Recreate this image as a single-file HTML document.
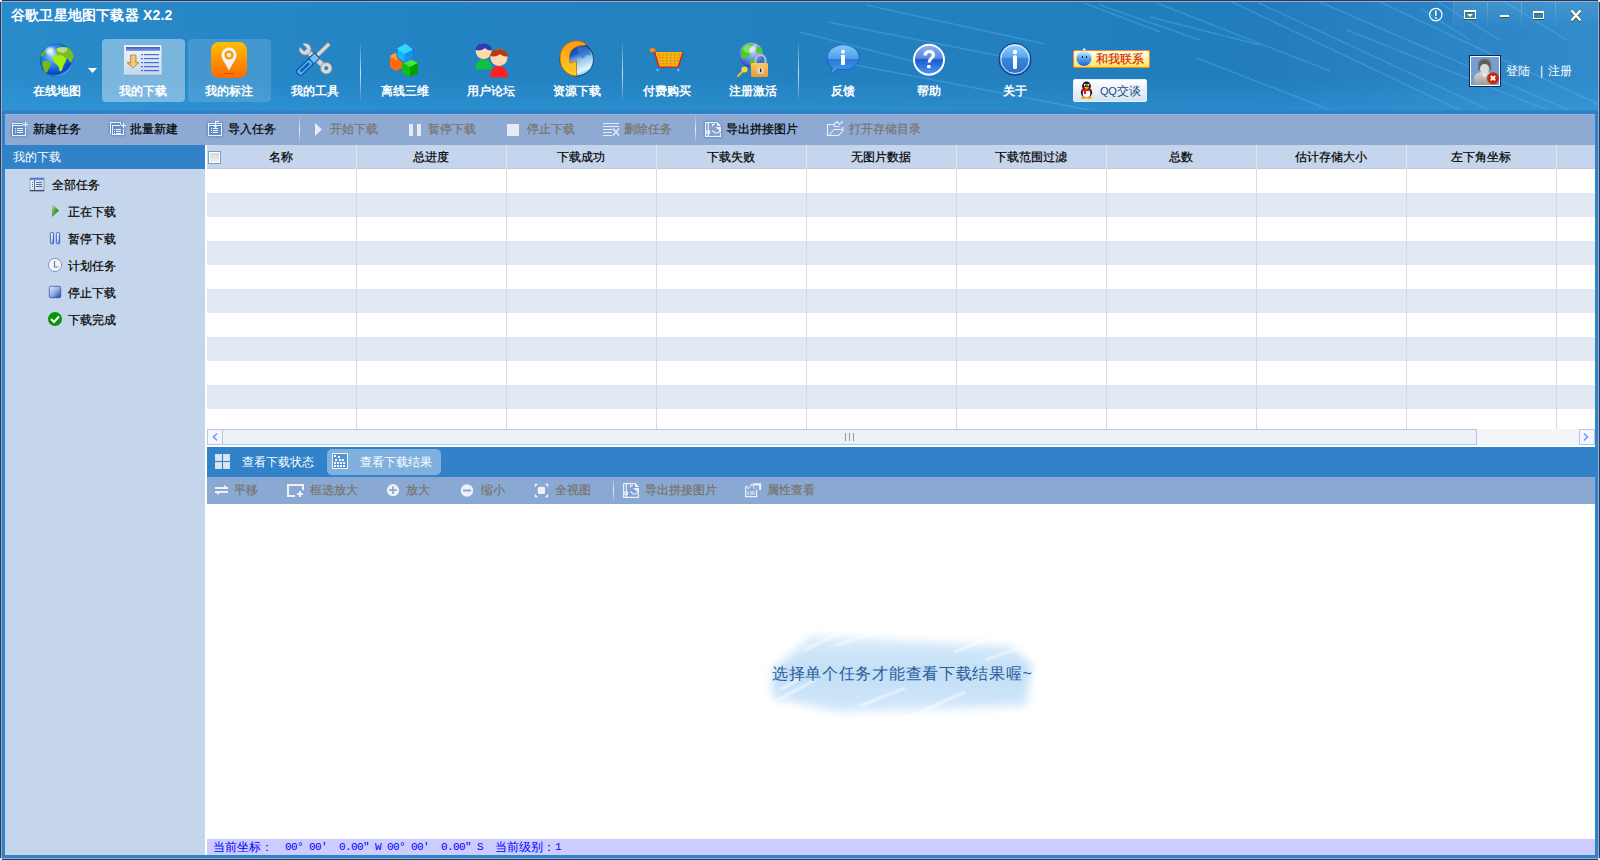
<!DOCTYPE html>
<html><head><meta charset="utf-8">
<style>
*{box-sizing:border-box}
html,body{margin:0;padding:0}
body{width:1600px;height:860px;position:relative;overflow:hidden;background:#2b3a4e;font-family:"Liberation Sans",sans-serif;font-size:12px;color:#000}
.a{position:absolute}
.tb,.li,.ht,.mt,.st{-webkit-text-stroke-width:.2px}
.t{position:absolute;white-space:nowrap;line-height:12px;font-size:12px}
#hdr{left:2px;top:2px;width:1596px;height:108px;background:linear-gradient(rgba(60,170,235,0) 70%,rgba(60,170,235,.3) 100%),linear-gradient(to right,#2a8bcb 0%,#2483c3 25%,#2380be 55%,#2179bc 100%)}
.btn{position:absolute;top:39px;width:83px;height:63px;border-radius:4px}
.lbl{position:absolute;top:85px;color:#fff;font-weight:bold;font-size:12px;line-height:12px;white-space:nowrap;text-align:center;width:90px;margin-left:-45px}
.sep{position:absolute;top:40px;width:1px;height:62px;background:linear-gradient(rgba(255,255,255,0),rgba(255,255,255,.75) 55%,rgba(255,255,255,0))}
.tb{position:absolute;top:123px;color:#000;line-height:12px}
.tbd{color:#79746e}
.row{position:absolute;left:207px;width:1388px;height:24px;background:#e2e8f4}
.vl{position:absolute;top:169px;width:1px;height:260px;background:#dadada}
.hl{position:absolute;top:145px;width:1px;height:24px;background:#dfe7f2}
.ht{position:absolute;top:151px;width:150px;text-align:center;line-height:12px}
.li{position:absolute;color:#000;line-height:12px}
.sm{position:absolute;top:841px;color:#0000ff;font-family:"Liberation Mono",monospace;font-size:11px;line-height:12px;letter-spacing:-.6px;white-space:nowrap}
.mt{position:absolute;top:484px;color:#78736d;line-height:12px}
</style></head>
<body>
<!-- frame -->
<div class="a" style="left:1px;top:1px;width:1598px;height:858px;background:#8cb0de"></div>
<div class="a" style="left:2px;top:2px;width:1596px;height:856px;background:#3182c8"></div>
<div class="a" id="hdr"></div>
<svg class="a" style="left:2px;top:2px" width="1596" height="108" viewBox="2 2 1596 108"><defs><filter id="bl" x="-10%" y="-10%" width="120%" height="120%"><feGaussianBlur stdDeviation="0.9"/></filter><filter id="bl2" x="-10%" y="-10%" width="120%" height="120%"><feGaussianBlur stdDeviation="0.7"/></filter></defs>
 <rect x="2" y="2" width="1596" height="108" fill="url(#trg)"/>
 <radialGradient id="trg" cx="1600" cy="50" r="330" gradientUnits="userSpaceOnUse"><stop offset="0" stop-color="#5ab8f0" stop-opacity=".3"/><stop offset="1" stop-color="#5ab8f0" stop-opacity="0"/></radialGradient>
 <g stroke="#58b4ec" stroke-width="1.4" fill="none" opacity=".38" filter="url(#bl2)">
  <path d="M1157 3 L1330 71"/>
  <path d="M1197 58 L1330 110"/>
  <path d="M1232 2 L1470 115"/>
  <path d="M1259 3 L1500 115"/>
  <path d="M1150 17 L1260 45"/>
  <path d="M1347 30 L1560 115"/>
  <path d="M1380 2 L1600 105"/>
  <path d="M1320 2 L1580 115"/>
  <path d="M1100 5 L1200 40"/>
  <path d="M828 22 L1000 56"/>
  <path d="M800 32 L935 67"/>
  <path d="M866 5 L1045 44"/>
  <path d="M1084 3 L1160 32"/>
  <path d="M840 62 L1100 112"/>
 </g>
</svg>
<!-- window controls -->
<svg class="a" style="left:1420px;top:0" width="180" height="40" viewBox="1420 0 180 40">
 <defs><linearGradient id="wsep" x1="0" y1="0" x2="0" y2="1"><stop offset="0" stop-color="#fff" stop-opacity=".22"/><stop offset="1" stop-color="#fff" stop-opacity="0"/></linearGradient></defs>
 <rect x="1454" y="2" width="144" height="26" fill="url(#wbg)"/>
 <linearGradient id="wbg" x1="0" y1="0" x2="0" y2="1"><stop offset="0" stop-color="#fff" stop-opacity=".1"/><stop offset="1" stop-color="#fff" stop-opacity="0"/></linearGradient>
 <g stroke="#5cc0f4" stroke-width="1.3" opacity=".35"><path d="M1438 2L1500 40"/><path d="M1505 2L1567 40"/><path d="M1420 8L1470 40"/></g>
 <g fill="url(#wsep)"><rect x="1453" y="2" width="1" height="26"/><rect x="1487" y="2" width="1" height="26"/><rect x="1521" y="2" width="1" height="26"/><rect x="1555" y="2" width="1" height="26"/></g>
 <circle cx="1435.8" cy="14.6" r="6.2" fill="none" stroke="#fff" stroke-width="1.2"/>
 <rect x="1435" y="10.5" width="1.6" height="5.5" fill="#fff"/><rect x="1435" y="17" width="1.6" height="1.6" fill="#fff"/>
 <g shape-rendering="crispEdges">
  <rect x="1464" y="10" width="12" height="10" fill="#4a5a08"/>
  <rect x="1464" y="10" width="12" height="9" fill="#fff"/>
  <rect x="1465" y="12" width="10" height="6" fill="#2b86c6"/>
  <rect x="1465" y="12" width="10" height="1" fill="#5a6a10"/>
  <rect x="1500" y="15" width="9" height="3" fill="#4a5a08"/><rect x="1500" y="15" width="9" height="2" fill="#fff"/>
  <rect x="1533" y="11" width="11" height="9" fill="#4a5a08"/>
  <rect x="1533" y="11" width="11" height="8" fill="#fff"/>
  <rect x="1534" y="13" width="9" height="5" fill="#2b84c4"/>
  <rect x="1534" y="13" width="9" height="1" fill="#5a6a10"/>
 </g>
 <path d="M1467 14h6l-3 3z" fill="#fff"/>
 <path d="M1571.5 11.5L1580.5 21.5M1580.5 11.5L1571.5 21.5" stroke="#4a5a08" stroke-width="2.2"/>
 <path d="M1571.5 10.5L1580.5 20.5M1580.5 10.5L1571.5 20.5" stroke="#fff" stroke-width="2.2"/>
</svg>

<svg class="a" style="left:0;top:0" width="1600" height="860" viewBox="0 0 1600 860">
 <path d="M0 0h2.4L0 2.4z" fill="#fff"/><path d="M1600 0h-2.4L1600 2.4z" fill="#fff"/>
 <path d="M0 860h2.4L0 857.6z" fill="#fff"/><path d="M1600 860h-2.4l2.4-2.4z" fill="#fff"/>
 <path d="M1.5 3.5l2-2" stroke="#2a8cd0" stroke-width="1"/><path d="M1598.5 3.5l-2-2" stroke="#2a8cd0" stroke-width="1"/>
</svg>
<!-- title -->
<div class="t" style="left:11px;top:8px;color:#fff;font-weight:bold;font-size:14px;line-height:14px;letter-spacing:.2px">谷歌卫星地图下载器 X2.2</div>

<!-- header buttons -->
<div class="btn" style="left:102px;background:rgba(255,255,255,.38)"></div>
<div class="btn" style="left:188px;background:rgba(255,255,255,.14)"></div>
<div class="sep" style="left:360px"></div>
<div class="sep" style="left:622px"></div>
<div class="sep" style="left:798px"></div>
<svg class="a" style="left:0;top:36px" width="1200" height="72" viewBox="0 36 1200 72">
 <defs>
  <radialGradient id="gGlobe" cx=".4" cy=".35" r=".7"><stop offset="0" stop-color="#a8dcff"/><stop offset=".4" stop-color="#2a88ec"/><stop offset=".82" stop-color="#0a40c0"/><stop offset=".95" stop-color="#40b8f0"/><stop offset="1" stop-color="#a0e8ff"/></radialGradient>
  <filter id="gbl" x="-50%" y="-50%" width="200%" height="200%"><feGaussianBlur stdDeviation="1.2"/></filter>
  <linearGradient id="gWin" x1="0" y1="0" x2="0" y2="1"><stop offset="0" stop-color="#f4f8fd"/><stop offset="1" stop-color="#c4d6ee"/></linearGradient>
  <linearGradient id="gBar" x1="0" y1="0" x2="0" y2="1"><stop offset="0" stop-color="#3559c8"/><stop offset="1" stop-color="#88a4e0"/></linearGradient>
  <linearGradient id="gArrow" x1="0" y1="0" x2="1" y2="0"><stop offset="0" stop-color="#c89a30"/><stop offset=".5" stop-color="#f4d090"/><stop offset="1" stop-color="#d8a840"/></linearGradient>
  <linearGradient id="gOr" x1="0" y1="0" x2="0" y2="1"><stop offset="0" stop-color="#ffbf00"/><stop offset="1" stop-color="#ff6a00"/></linearGradient>
  <linearGradient id="gBlueBall" x1="0" y1="0" x2="0" y2="1"><stop offset="0" stop-color="#d8f0ff"/><stop offset=".45" stop-color="#5aaef0"/><stop offset="1" stop-color="#1a60d0"/></linearGradient>
  <linearGradient id="gBall2" x1="0" y1="0" x2="0" y2="1"><stop offset="0" stop-color="#8ac8f8"/><stop offset=".48" stop-color="#4aa0e8"/><stop offset=".5" stop-color="#2a78d8"/><stop offset="1" stop-color="#4a9ef0"/></linearGradient>
  <linearGradient id="gBadge" x1="0" y1="0" x2="0" y2="1"><stop offset="0" stop-color="#fffdf0"/><stop offset=".5" stop-color="#fff4b0"/><stop offset="1" stop-color="#ffe050"/></linearGradient>
  <linearGradient id="gQQ" x1="0" y1="0" x2="0" y2="1"><stop offset="0" stop-color="#ffffff"/><stop offset="1" stop-color="#d4e2f4"/></linearGradient>
  <linearGradient id="gLock" x1="0" y1="0" x2="0" y2="1"><stop offset="0" stop-color="#ffc860"/><stop offset="1" stop-color="#e89a30"/></linearGradient>
  <linearGradient id="gRes" x1=".3" y1="0" x2=".7" y2="1"><stop offset="0" stop-color="#0a3a98"/><stop offset=".35" stop-color="#1a5cc0"/><stop offset=".55" stop-color="#8ac4ec"/><stop offset=".85" stop-color="#e8f6ff"/><stop offset="1" stop-color="#30b8f0"/></linearGradient>
  <linearGradient id="gArr2" x1="0" y1="0" x2="0" y2="1"><stop offset="0" stop-color="#ff9a10"/><stop offset=".6" stop-color="#ffb820"/><stop offset="1" stop-color="#ffd020"/></linearGradient>
  <radialGradient id="gReg" cx=".55" cy=".25" r=".8"><stop offset="0" stop-color="#e0e8ff"/><stop offset=".5" stop-color="#7a90f0"/><stop offset="1" stop-color="#2040c0"/></radialGradient>
  <linearGradient id="gHelp" x1="0" y1="0" x2="0" y2="1"><stop offset="0" stop-color="#90b4ec"/><stop offset=".45" stop-color="#5a88e0"/><stop offset=".5" stop-color="#1a5ad0"/><stop offset="1" stop-color="#4a9cf4"/></linearGradient>
  <linearGradient id="gAbout" x1="0" y1="0" x2="0" y2="1"><stop offset="0" stop-color="#9ad0f8"/><stop offset=".42" stop-color="#5aaaf0"/><stop offset=".48" stop-color="#3a86dc"/><stop offset="1" stop-color="#2a6cc8"/></linearGradient>
 </defs>
 <!-- globe -->
 <circle cx="56.6" cy="60.2" r="16.8" fill="#0e3878" opacity=".5"/>
 <circle cx="56.6" cy="60.2" r="16.4" fill="url(#gGlobe)"/>
 <path d="M55.5 49c3-2 8-2.5 12-1.5 3 1.5 5.5 5 6 9-.5 2.5-1.5 5-3 6.5-1-1.5-1.5-3.5-3-4-1.5 0-2.5-1.5-3.5-2.5-2 0-4 .5-5.5-.5-1.5-1-2-3-3-4.5z" fill="#78c020"/>
 <path d="M57 48.5c3-1.5 7-1.5 10-.5 1 2-1 4-3.5 5-2.5 0-5-1-6.5-2.5z" fill="#c8e0a0" opacity=".8"/>
 <path d="M53 56c2.5-1 6-1 8.5-.5 2 .5 3.5 1.5 4.5 3 .5 2-.5 3.5-1.5 5-1 1.5-1.5 3.5-2 5.5-.5 1.5-1.5 2.5-2.5 2.5-1-1.5-1-3.5-1.5-5-1-1.5-3-2.5-4.5-4.5-1-2-1.5-4-1-6z" fill="#a6ee10"/>
 <path d="M42 62c2-1.5 5-1.5 7-.5 1.5 1 2.5 2.5 2 4-1 2-2.5 3-3 5-.5 1.5-1.5 2.5-2.5 2-1.5-2-2.5-4.5-3-6.5-.5-1.5-.5-3 .5-4z" fill="#7ab818"/>
 <path d="M40.5 56c1-3 3-5.5 6-7 .5 2-1 4.5-2.5 6.5-1 1-2.5 1.5-3.5.5z" fill="#70b020"/>
 <circle cx="50" cy="51" r="3.8" fill="#fff" opacity=".85" filter="url(#gbl)"/>
 <path d="M88 68h9l-4.5 5z" fill="#fff"/>
 <!-- download window -->
 <rect x="124.5" y="45.5" width="36.5" height="29" fill="url(#gWin)" stroke="#dfe8f4" stroke-width="1"/>
 <rect x="124" y="74.5" width="37" height="1" fill="#7a8ab0" opacity=".6"/>
 <rect x="126" y="47" width="34" height="4" fill="url(#gBar)"/>
 <g fill="#4a6ad4"><rect x="141" y="54" width="2" height="1.2"/><rect x="144" y="54" width="15" height="1.2"/>
 <rect x="141" y="58" width="2" height="1.2"/><rect x="144" y="58" width="15" height="1.2"/>
 <rect x="141" y="62" width="2" height="1.2"/><rect x="144" y="62" width="15" height="1.2"/>
 <rect x="141" y="66" width="2" height="1.2"/><rect x="144" y="66" width="15" height="1.2"/>
 <rect x="141" y="70" width="2" height="1.2"/><rect x="144" y="70" width="15" height="1.2"/></g>
 <path d="M130.5 55h5.5v7.5h3l-6 5.5-6-5.5h3.5z" fill="url(#gArrow)" stroke="#b88a20" stroke-width=".8"/>
 <!-- pin -->
 <rect x="211" y="42" width="36" height="36" rx="8" fill="url(#gOr)"/>
 <path d="M229 47.5a7.6 7.6 0 0 1 7.6 7.6c0 4-4.5 9-7.6 15.5-3.1-6.5-7.6-11.5-7.6-15.5a7.6 7.6 0 0 1 7.6-7.6z" fill="#f2f2f6"/>
 <circle cx="229" cy="55" r="4.6" fill="#ff9a00"/>
 <circle cx="229" cy="55" r="2.3" fill="#f8e8e0"/>
 <rect x="224" y="73" width="10" height="1" fill="#a04800" opacity=".6"/>
 <!-- tools -->
 <g transform="translate(315.5 58.5) rotate(42)">
  <rect x="-12" y="-2.6" width="25" height="5.2" rx="1" fill="#d4d4d4" stroke="#8c8c8c" stroke-width=".8"/>
  <circle cx="14.5" cy="0" r="5.8" fill="#d8d8d8" stroke="#8c8c8c" stroke-width=".8"/>
  <circle cx="14.5" cy="0" r="2" fill="#2a88c8"/>
  <circle cx="-14" cy="0" r="6" fill="#d8d8d8" stroke="#8c8c8c" stroke-width=".8"/>
  <rect x="-21" y="-2.2" width="8" height="4.4" fill="#2b87c7"/>
 </g>
 <g transform="translate(313.5 59) rotate(-44)">
  <rect x="5" y="-1.9" width="17" height="3.8" rx="1" fill="#d8d8d8" stroke="#8c8c8c" stroke-width=".7"/>
  <rect x="-21.5" y="-3.4" width="19" height="6.8" rx="2.4" fill="#50b0f4" stroke="#0e4a98" stroke-width="1"/>
  <rect x="-18" y="-1.3" width="12" height="2.6" rx="1" fill="#1a58b8"/>
  <rect x="-3" y="-3.8" width="8" height="7.6" rx="1.5" fill="#6cc0f8" stroke="#0e4a98" stroke-width="1"/>
 </g>
 <!-- cubes -->
 <path d="M390 56l5-3 7 4v11l-6 3-6-4z" fill="#ff6a10"/>
 <path d="M390 56l5-3 7 4-6 3z" fill="#ffa040"/>
 <path d="M402 62l8-3 8 4v10l-8 4-8-4z" fill="#10c010"/>
 <path d="M402 62l8-3 8 4-8 4z" fill="#40e840"/>
 <path d="M410 67v10l8-4V63z" fill="#00a000"/>
 <path d="M397 48.5l8.5-5 7.5 6v9l-9 4-7-5z" fill="#10b8f8" stroke="#1a60d0" stroke-width=".8"/>
 <path d="M397 48.5l8.5-5 7.5 6-8.5 4.5z" fill="#30d8ff"/>
 <path d="M404.5 54v8.4l8.5-4V49.5z" fill="#1890f0"/>
 <!-- users -->
 <path d="M475.5 69.5c0-6 3-10.5 8-10.5s8.5 4.5 8.5 10.5z" fill="#10c040"/>
 <circle cx="483.7" cy="51" r="8" fill="#ffd8b0"/>
 <path d="M475.5 50c0-4 3.5-7 8-7s8.5 3 8.5 7c-2 1-5 0-7-2-2 2-6 3-9.5 2z" fill="#2a40b8"/>
 <path d="M490 77.5c0-6.5 3.5-11.5 9-11.5s9 5 9 11.5z" fill="#ff2020"/>
 <circle cx="499" cy="57.5" r="8.5" fill="#ffd8b0"/>
 <path d="M490.3 56c0-4 4-7 8.7-7s9 3 9 7c-2 1-6 0-8-2-2 2-6 3-9.7 2z" fill="#b83a10"/>
 <!-- resource globe -->
 <circle cx="576.7" cy="59.2" r="16.8" fill="url(#gRes)" stroke="#0a2a60" stroke-width=".8"/>
 <path d="M578 47c3-1 6 1 8 0 2 2 4 5 5 8-2 1-3-1-5 0-1 2-3 4-5 3-1-2 1-4-1-5-2 0-3-3-2-6z" fill="#3a78c8" opacity=".7"/>
 <path d="M587 44.5A16.6 16.6 0 0 0 560 59.5 16.6 16.6 0 0 0 576.5 76V61l-6 2c-1.5-4-1.5-9 1-12.5 3-3.5 7-5 12-5z" fill="url(#gArr2)" stroke="#b85a00" stroke-width=".7"/>
 <!-- cart -->
 <path d="M655 52h28l-5 15h-19z" fill="#ffb000"/>
 <g fill="#2a80c0" opacity=".55">
  <rect x="658" y="54" width="1.4" height="1.4"/><rect x="662" y="54" width="1.4" height="1.4"/><rect x="666" y="54" width="1.4" height="1.4"/><rect x="670" y="54" width="1.4" height="1.4"/><rect x="674" y="54" width="1.4" height="1.4"/><rect x="678" y="54" width="1.4" height="1.4"/>
  <rect x="659" y="57" width="1.4" height="1.4"/><rect x="662" y="57" width="1.4" height="1.4"/><rect x="666" y="57" width="1.4" height="1.4"/><rect x="670" y="57" width="1.4" height="1.4"/><rect x="674" y="57" width="1.4" height="1.4"/><rect x="678" y="57" width="1.4" height="1.4"/>
  <rect x="659" y="60" width="1.4" height="1.4"/><rect x="662" y="60" width="1.4" height="1.4"/><rect x="666" y="60" width="1.4" height="1.4"/><rect x="670" y="60" width="1.4" height="1.4"/><rect x="674" y="60" width="1.4" height="1.4"/><rect x="677" y="60" width="1.4" height="1.4"/>
  <rect x="660" y="63" width="1.4" height="1.4"/><rect x="663" y="63" width="1.4" height="1.4"/><rect x="666" y="63" width="1.4" height="1.4"/><rect x="670" y="63" width="1.4" height="1.4"/><rect x="674" y="63" width="1.4" height="1.4"/>
 </g>
 <path d="M654 50l5 17h19l5-15" fill="none" stroke="#e81010" stroke-width="1.2"/>
 <ellipse cx="652.5" cy="50" rx="3" ry="2" fill="#ff8a10"/>
 <circle cx="658" cy="70.5" r="2.3" fill="#2a8ad8"/><circle cx="679" cy="70.5" r="2.3" fill="#2a8ad8"/>
 <circle cx="657.3" cy="69.8" r=".9" fill="#9ad8ff"/><circle cx="678.3" cy="69.8" r=".9" fill="#9ad8ff"/>
 <!-- register -->
 <circle cx="751" cy="55" r="12.3" fill="url(#gReg)"/>
 <path d="M741 50c2-5 8-7 13-6-1 3-4 3-5 6 0 3 2 4 1 6-2 2-4 0-5 2-1 2-3 1-4-1 0-2 1-4 0-7z M751 59c3-1 5 2 4 5 0 3-2 5-3 5-2-3-3-7-1-10z M757 46c3 1 6 4 6 8-2 0-3-2-4-1-1 1-3 0-3-2 1-2 0-3 1-5z" fill="#48d020"/>
 <ellipse cx="749" cy="49" rx="6" ry="4" fill="#fff" opacity=".3"/>
 <path d="M755.5 64v-4a5 5 0 0 1 10 0v4" fill="none" stroke="#b8bcc8" stroke-width="2"/>
 <rect x="751" y="63" width="17" height="14" rx="1.5" fill="url(#gLock)"/>
 <circle cx="760.5" cy="70.5" r="3.4" fill="#d8d8dc"/><rect x="760" y="68.6" width="1.3" height="3.6" fill="#501010"/>
 <path d="M737.5 76.5l6-6" stroke="#f0c030" stroke-width="1.8"/><circle cx="744.5" cy="69.5" r="3" fill="#f8d830"/>
 <!-- feedback -->
 <path d="M843.2 44.8c8.8 0 16 5.6 16 12.5s-7.2 12.5-16 12.5c-2 0-4-.3-5.6-.8-2 2.5-5 4.2-8 4.8 1.5-1.6 2.4-3.6 2.6-6-3.2-2.3-5-5.4-5-10.5 0-6.9 7.2-12.5 16-12.5z" fill="url(#gBall2)" stroke="#1a58b8" stroke-width=".8"/>
 <circle cx="843" cy="51.7" r="2" fill="#fff"/><rect x="841" y="55" width="4" height="10" fill="#fff"/>
 <!-- help -->
 <circle cx="929" cy="59.7" r="16" fill="#0a3a9a"/><circle cx="929" cy="59.7" r="15" fill="url(#gHelp)" stroke="#fff" stroke-width="2"/>
 <path d="M923.5 55.5c0-3.5 2.6-5.5 5.8-5.5 3.4 0 5.8 2 5.8 5 0 3.5-4.2 4-4.2 7.5h-3.2c0-4.5 4-5 4-7.5 0-1.2-1-2-2.4-2-1.5 0-2.4 1-2.4 2.5z" fill="#fff"/>
 <rect x="927" y="65" width="3.6" height="3.2" rx=".8" fill="#fff"/>
 <!-- about -->
 <circle cx="1015" cy="59.3" r="16" fill="url(#gAbout)" stroke="#0a3478" stroke-width="1"/>
 <circle cx="1015" cy="59.3" r="14.2" fill="none" stroke="#fff" stroke-width="1" opacity=".85"/>
 <circle cx="1015" cy="52" r="2.2" fill="#fff"/><rect x="1013" y="55.2" width="4" height="13.8" rx="1.5" fill="#fff"/>
 <!-- contact badge -->
 <rect x="1073.5" y="50.5" width="76" height="17" rx="1.5" fill="url(#gBadge)" stroke="#f08830" stroke-width="1"/>
 <circle cx="1084" cy="58.5" r="7.6" fill="url(#gBlueBall)"/>
 <rect x="1083" y="48.5" width="2.5" height="2" fill="#e8f4ff"/>
 <rect x="1082" y="56" width="1" height="2" fill="#111"/><rect x="1086" y="56" width="1" height="2" fill="#111"/>
 <!-- QQ button -->
 <rect x="1073.5" y="79.5" width="73" height="22" rx="1.5" fill="url(#gQQ)" stroke="#e8eef8" stroke-width="1"/>
 <ellipse cx="1086.5" cy="92.5" rx="5.6" ry="5.2" fill="#151515"/>
 <circle cx="1086.5" cy="86" r="4.4" fill="#151515"/>
 <ellipse cx="1086.5" cy="93.5" rx="3.8" ry="4" fill="#fff"/>
 <circle cx="1085.2" cy="85" r="1.3" fill="#fff"/><circle cx="1088" cy="85" r="1.3" fill="#fff"/>
 <circle cx="1085.5" cy="85.2" r=".6" fill="#000"/><circle cx="1087.7" cy="85.2" r=".6" fill="#000"/>
 <ellipse cx="1086.6" cy="87.8" rx="2.6" ry="1.1" fill="#ffb000"/>
 <path d="M1081.5 89.2h10v1.8h-10z" fill="#e81a10"/><path d="M1084 91h2v3h-2z" fill="#e81a10"/>
 <ellipse cx="1083.6" cy="97.8" rx="2.6" ry="1.2" fill="#ffa800"/><ellipse cx="1089.4" cy="97.8" rx="2.6" ry="1.2" fill="#ffa800"/>
</svg>
<div class="t" style="left:1096px;top:53px;color:#d42a00;font-size:12px;-webkit-text-stroke-width:.2px">和我联系</div>
<div class="t" style="left:1100px;top:85px;color:#1a4e88;font-size:12px"><span style="font-size:11px;letter-spacing:-.3px">QQ</span>交谈</div>
<!-- avatar -->
<svg class="a" style="left:1468px;top:54px" width="34" height="34" viewBox="1468 54 34 34">
 <defs><linearGradient id="avb" x1="0" y1="0" x2="0" y2="1"><stop offset="0" stop-color="#d8d8d8"/><stop offset="1" stop-color="#9a9a9a"/></linearGradient></defs>
 <rect x="1469" y="55" width="32" height="32" fill="#062a58"/>
 <rect x="1470" y="56" width="30" height="30" fill="#fff"/>
 <rect x="1471" y="57" width="28" height="28" fill="#7a9dd0"/>
 <path d="M1474 85v-7c0-3 3-5 7-6h7c3 1 5 3 5 6v7z" fill="url(#avb)"/>
 <path d="M1482 73.5l2.5 4 2.5-4z" fill="#f4f4f4"/>
 <path d="M1478 70v-5a6.6 6.6 0 0 1 13.2 0v5z" fill="#6a6a6a"/>
 <ellipse cx="1484.6" cy="68.8" rx="4.6" ry="4.8" fill="#dcdcdc"/>
 <path d="M1480 65.5c1.5-2 3.5-2.5 5-2.2 2 .3 3.5 1.2 4.4 2.5v-1.5c-1-2.5-3-3.6-4.8-3.6-2 0-4 1-4.6 3z" fill="#5a5a5a"/>
 <circle cx="1493" cy="78.2" r="6" fill="#c42a0c"/>
 <path d="M1490.8 76l4.4 4.4M1495.2 76l-4.4 4.4" stroke="#fff" stroke-width="1.8"/>
</svg>
<div class="t" style="left:1540px;top:65px;color:#fff;font-size:12px">|</div>
<div class="lbl" style="left:57px">在线地图</div>
<div class="lbl" style="left:143px">我的下载</div>
<div class="lbl" style="left:229px">我的标注</div>
<div class="lbl" style="left:315px">我的工具</div>
<div class="lbl" style="left:405px">离线三维</div>
<div class="lbl" style="left:491px">用户论坛</div>
<div class="lbl" style="left:577px">资源下载</div>
<div class="lbl" style="left:667px">付费购买</div>
<div class="lbl" style="left:753px">注册激活</div>
<div class="lbl" style="left:843px">反馈</div>
<div class="lbl" style="left:929px">帮助</div>
<div class="lbl" style="left:1015px">关于</div>

<!-- task toolbar -->
<div class="a" style="left:5px;top:114px;width:1590px;height:31px;background:#8eaad2;border-top:1px solid #9cb5da"></div>
<div class="tb" style="left:33px">新建任务</div>
<div class="tb" style="left:130px">批量新建</div>
<div class="tb" style="left:228px">导入任务</div>
<div class="tb tbd" style="left:330px">开始下载</div>
<div class="tb tbd" style="left:428px">暂停下载</div>
<div class="tb tbd" style="left:527px">停止下载</div>
<div class="tb tbd" style="left:624px">删除任务</div>
<div class="tb" style="left:726px">导出拼接图片</div>
<div class="tb tbd" style="left:849px">打开存储目录</div>

<!-- left panel -->
<div class="a" style="left:5px;top:145px;width:200px;height:24px;background:#3182c8"></div>
<div class="t" style="left:13px;top:151px;color:#fff">我的下载</div>
<div class="a" style="left:5px;top:169px;width:200px;height:686px;background:#c5d5eb"></div>
<div class="li" style="left:52px;top:179px">全部任务</div>
<div class="li" style="left:68px;top:206px">正在下载</div>
<div class="li" style="left:68px;top:233px">暂停下载</div>
<div class="li" style="left:68px;top:260px">计划任务</div>
<div class="li" style="left:68px;top:287px">停止下载</div>
<div class="li" style="left:68px;top:314px">下载完成</div>

<!-- right area -->
<div class="a" style="left:205px;top:145px;width:1390px;height:710px;background:#fff"></div>
<div class="a" style="left:207px;top:145px;width:1388px;height:24px;background:#c5d5eb;border-bottom:1px solid #bccbe2"></div>
<div class="row" style="top:193px"></div>
<div class="row" style="top:241px"></div>
<div class="row" style="top:289px"></div>
<div class="row" style="top:337px"></div>
<div class="row" style="top:385px"></div>
<div class="vl" style="left:356px"></div><div class="vl" style="left:506px"></div><div class="vl" style="left:656px"></div>
<div class="vl" style="left:806px"></div><div class="vl" style="left:956px"></div><div class="vl" style="left:1106px"></div>
<div class="vl" style="left:1256px"></div><div class="vl" style="left:1406px"></div><div class="vl" style="left:1556px"></div>
<div class="hl" style="left:356px"></div><div class="hl" style="left:506px"></div><div class="hl" style="left:656px"></div>
<div class="hl" style="left:806px"></div><div class="hl" style="left:956px"></div><div class="hl" style="left:1106px"></div>
<div class="hl" style="left:1256px"></div><div class="hl" style="left:1406px"></div><div class="hl" style="left:1556px"></div>
<div class="ht" style="left:206px">名称</div>
<div class="ht" style="left:356px">总进度</div>
<div class="ht" style="left:506px">下载成功</div>
<div class="ht" style="left:656px">下载失败</div>
<div class="ht" style="left:806px">无图片数据</div>
<div class="ht" style="left:956px">下载范围过滤</div>
<div class="ht" style="left:1106px">总数</div>
<div class="ht" style="left:1256px">估计存储大小</div>
<div class="ht" style="left:1406px">左下角坐标</div>
<div class="a" style="left:208px;top:151px;width:13px;height:13px;border:1px solid #7b9dc2;background:linear-gradient(#d6d6d6,#f2f2f2);box-shadow:inset 0 0 0 1px #fff"></div>

<!-- scrollbar -->
<div class="a" style="left:207px;top:429px;width:1388px;height:16px;background:#f3f5f9"></div>
<div class="a" style="left:207px;top:429px;width:16px;height:16px;border:1px solid #b9c7de;background:#f3f6fc"></div>
<div class="a" style="left:222px;top:429px;width:1255px;height:16px;border:1px solid #b9c7de;background:#ecf0f9"></div>
<div class="a" style="left:1579px;top:429px;width:16px;height:16px;border:1px solid #b9c7de;background:#f3f6fc"></div>

<!-- tab bar -->
<div class="a" style="left:207px;top:447px;width:1388px;height:30px;background:#3182c8"></div>
<div class="a" style="left:327px;top:449px;width:114px;height:26px;border-radius:5px;background:#80b1de"></div>
<div class="t" style="left:242px;top:456px;color:#fff">查看下载状态</div>
<div class="t" style="left:360px;top:456px;color:#fff">查看下载结果</div>

<!-- map toolbar -->
<div class="a" style="left:207px;top:477px;width:1388px;height:27px;background:#8aa9d2"></div>
<div class="mt" style="left:234px">平移</div>
<div class="mt" style="left:310px">框选放大</div>
<div class="mt" style="left:406px">放大</div>
<div class="mt" style="left:481px">缩小</div>
<div class="mt" style="left:555px">全视图</div>
<div class="mt" style="left:645px">导出拼接图片</div>
<div class="mt" style="left:767px">属性查看</div>

<!-- icons layer -->
<svg class="a" style="left:0;top:112px" width="1000" height="400" viewBox="0 112 1000 400">
 <defs>
  <filter id="gl" x="-30%" y="-30%" width="160%" height="160%"><feGaussianBlur stdDeviation="0.8"/></filter>
  <linearGradient id="gPause" x1="0" y1="0" x2="1" y2="1"><stop offset="0" stop-color="#ffffff"/><stop offset=".6" stop-color="#b8d0f8"/><stop offset="1" stop-color="#1a3ea8"/></linearGradient>
  <linearGradient id="gStop" x1="0" y1="0" x2="1" y2="1"><stop offset="0" stop-color="#e8f0ff"/><stop offset=".55" stop-color="#8aa8e0"/><stop offset="1" stop-color="#1a3a98"/></linearGradient>
  <linearGradient id="gPlay" x1="0" y1="0" x2="1" y2="1"><stop offset="0" stop-color="#b8e8a8"/><stop offset=".5" stop-color="#4aa040"/><stop offset="1" stop-color="#1a6a10"/></linearGradient>
  <linearGradient id="gList" x1="0" y1="0" x2="1" y2="1"><stop offset="0" stop-color="#ffffff"/><stop offset="1" stop-color="#b8cef0"/></linearGradient>
  <linearGradient id="gLbar" x1="0" y1="0" x2="0" y2="1"><stop offset="0" stop-color="#3a62d8"/><stop offset="1" stop-color="#8aaef0"/></linearGradient>
 </defs>
 <!-- toolbar separators -->
 <rect x="299" y="115" width="1" height="29" fill="url(#sepG)"/>
 <rect x="695" y="115" width="1" height="29" fill="url(#sepG)"/>
 <rect x="613" y="478" width="1" height="25" fill="url(#sepG)"/>
 <linearGradient id="sepG" x1="0" y1="0" x2="0" y2="1"><stop offset="0" stop-color="#fff" stop-opacity="0"/><stop offset=".5" stop-color="#fff" stop-opacity=".8"/><stop offset="1" stop-color="#fff" stop-opacity="0"/></linearGradient>
 <!-- glow under white icons -->
 <g filter="url(#gl)" opacity=".55" fill="none" stroke="#3a6ab8" stroke-width="2.4">
  <path d="M12.5 123.5h10M12.5 125.5h10M12.5 123.5v12h13v-7"/>
  <path d="M110.5 122.5h10v3M110.5 122.5v11M112.5 125.5h7M112.5 125.5v9h11v-6"/>
  <path d="M208.5 123.5h13v12h-13zM208.5 125.5h13M215.5 121.5v7"/>
  <path d="M705.5 122.5h10l5 4v10h-15z"/>
 </g>
 <g fill="#2a64b0" opacity=".35" filter="url(#gl)"><rect x="13" y="126" width="12" height="9"/><rect x="113" y="126" width="10" height="8"/><rect x="209" y="126" width="12" height="9"/></g>
 <!-- 新建任务 -->
 <g fill="#eef3fa" shape-rendering="crispEdges">
  <rect x="12" y="123" width="11" height="1"/><rect x="12" y="125" width="11" height="1"/><rect x="12" y="123" width="1" height="13"/><rect x="12" y="135" width="14" height="1"/><rect x="25" y="128" width="1" height="8"/>
  <rect x="23" y="124" width="5" height="1"/><rect x="25" y="122" width="1" height="5"/>
  <rect x="15" y="128" width="1" height="1"/><rect x="15" y="130" width="1" height="1"/><rect x="15" y="132" width="1" height="1"/>
  <rect x="17" y="128" width="6" height="1"/><rect x="17" y="130" width="6" height="1"/><rect x="17" y="132" width="6" height="1"/>
 </g>
 <!-- 批量新建 -->
 <g fill="#eef3fa" shape-rendering="crispEdges">
  <rect x="110" y="122" width="10" height="1"/><rect x="110" y="122" width="1" height="12"/><rect x="120" y="122" width="1" height="3"/>
  <rect x="112" y="125" width="8" height="1"/><rect x="112" y="125" width="1" height="10"/><rect x="112" y="134" width="12" height="1"/><rect x="123" y="129" width="1" height="6"/>
  <rect x="121" y="125" width="5" height="1"/><rect x="123" y="123" width="1" height="5"/>
  <rect x="114" y="129" width="1" height="1"/><rect x="114" y="131" width="1" height="1"/><rect x="114" y="133" width="1" height="1"/>
  <rect x="116" y="129" width="5" height="1"/><rect x="116" y="131" width="5" height="1"/><rect x="116" y="133" width="5" height="1"/>
 </g>
 <!-- 导入任务 -->
 <g fill="#eef3fa" shape-rendering="crispEdges">
  <rect x="208" y="123" width="14" height="1"/><rect x="208" y="125" width="14" height="1"/><rect x="208" y="123" width="1" height="13"/><rect x="221" y="123" width="1" height="13"/><rect x="208" y="135" width="14" height="1"/>
  <rect x="215" y="121" width="1" height="7"/><rect x="215" y="121" width="4" height="1"/><rect x="214" y="126" width="3" height="1"/>
  <rect x="211" y="128" width="1" height="1"/><rect x="211" y="130" width="1" height="1"/><rect x="211" y="132" width="1" height="1"/>
  <rect x="213" y="128" width="5" height="1"/><rect x="213" y="130" width="5" height="1"/><rect x="213" y="132" width="5" height="1"/>
 </g>
 <!-- disabled -->
 <path d="M315 123L322 129.5 315 136z" fill="#e4ebf5"/>
 <rect x="409" y="124" width="4" height="12" fill="#e4ebf5"/><rect x="417" y="124" width="4" height="12" fill="#e4ebf5"/>
 <rect x="507" y="124" width="12" height="12" fill="#e4ebf5"/>
 <g fill="#e4ebf5" shape-rendering="crispEdges">
  <rect x="603" y="123" width="16" height="1"/><rect x="603" y="126" width="16" height="1"/><rect x="603" y="129" width="9" height="1"/><rect x="603" y="132" width="9" height="1"/><rect x="603" y="135" width="9" height="1"/>
 </g>
 <path d="M613 128.5l6 7M619 128.5l-6 7" stroke="#e4ebf5" stroke-width="1.5"/>
 <!-- export -->
 <path d="M705.5 122.5h11.5l3.5 3.5v10h-15z" fill="#6a96cc" opacity=".35"/>
 <g fill="none" stroke="#eef3fa" stroke-width="1.2">
  <path d="M705.6 122.6h11.4l3.4 3.4M720.4 132.5v3.9h-14.8v-13.8"/><path d="M708.3 122.6v13.8"/>
  <circle cx="708.2" cy="132.2" r="1.6"/>
  <path d="M712.5 126.5v-2h2.5"/>
  <path d="M712.5 130.5l2.5 2.5h3l2.5-2.5"/>
 </g>
 <path d="M715 127h6v5z" fill="#eef3fa"/><path d="M717 122.6l3.5 3.5h-3.5z" fill="#eef3fa"/>
 <!-- open folder -->
 <g fill="none" stroke="#e8eef7" stroke-width="1.1">
  <path d="M827.5 136V124.5h5.5l2 2h4.5"/>
  <path d="M827.5 135.5h11l4.5-5v-3.5"/>
  <path d="M829 135.5l5-6h9"/>
  <path d="M834 124.5l3-3 3 3"/>
 </g>
 <path d="M839.5 123.5h3v-3z" fill="#e8eef7"/>
 <!-- left panel -->
 <rect x="30" y="178" width="14" height="13" fill="url(#gList)" stroke="#6a82a8" stroke-width=".6"/>
 <rect x="30" y="178" width="14" height="2.4" fill="url(#gLbar)"/>
 <rect x="30" y="190" width="14" height="1.2" fill="#3a4a62"/>
 <rect x="34" y="180" width="1" height="10" fill="#5a6a88"/>
 <g fill="#5a6a90"><rect x="32" y="182" width="1" height="1"/><rect x="32" y="184" width="1" height="1"/><rect x="32" y="186" width="1" height="1"/><rect x="36" y="182" width="6" height="1"/><rect x="36" y="184" width="6" height="1"/><rect x="36" y="186" width="6" height="1"/></g>
 <path d="M52 204L59 210.5 52 217z" fill="url(#gPlay)"/>
 <rect x="50.4" y="232.4" width="3.2" height="11.4" rx="1.3" fill="url(#gPause)" stroke="#2a4ab8" stroke-width=".8"/>
 <rect x="56.4" y="232.4" width="3.2" height="11.4" rx="1.3" fill="url(#gPause)" stroke="#2a4ab8" stroke-width=".8"/>
 <circle cx="55" cy="265" r="6.6" fill="#f4f4f2" stroke="#7c9ac4" stroke-width="1"/>
 <path d="M54.5 261v6h4" fill="none" stroke="#5a7cb0" stroke-width="1.2"/>
 <rect x="49.3" y="286.3" width="11.4" height="11.4" rx="1.5" fill="url(#gStop)" stroke="#2848a8" stroke-width=".7"/>
 <circle cx="55" cy="319" r="7" fill="#0a940a"/>
 <path d="M51 319l3 3 5-5.5" fill="none" stroke="#fff" stroke-width="2"/>

 <!-- tab icons -->
 <g fill="#d8e6f4" stroke="#eaf2fa" stroke-width=".6">
  <rect x="215.3" y="454.3" width="6.4" height="6.4"/><rect x="223.3" y="454.3" width="6.4" height="6.4"/>
  <rect x="215.3" y="462.3" width="6.4" height="6.4"/><rect x="223.3" y="462.3" width="6.4" height="6.4"/>
 </g>
 <rect x="332.5" y="453.5" width="15" height="15" fill="#5a92d0" stroke="#eef4fb" stroke-width="1"/>
 <g fill="#fff"><rect x="334" y="455" width="2" height="2"/><rect x="338" y="456" width="2" height="2"/>
 <rect x="335" y="459" width="2" height="2"/><rect x="339" y="459" width="2" height="2"/><rect x="342" y="459" width="2" height="2"/>
 <rect x="334" y="462" width="2" height="2"/><rect x="337" y="462" width="2" height="2"/><rect x="340" y="462" width="2" height="2"/><rect x="343" y="462" width="2" height="2"/>
 <rect x="334" y="465" width="2" height="2"/><rect x="337" y="465" width="2" height="2"/><rect x="340" y="465" width="2" height="2"/><rect x="343" y="465" width="2" height="2"/></g>

 <!-- map toolbar icons -->
 <g fill="#eef2f8">
  <rect x="215" y="487" width="13" height="2"/><path d="M224 485l4 3h-4z"/>
  <rect x="215" y="491" width="13" height="2"/><path d="M219 495l-4-3h4z"/>
 </g>
 <path d="M288 493v-8h15v5M288 485v11h7" fill="none" stroke="#eef2f8" stroke-width="2"/>
 <path d="M300 491v6M297 494h6" stroke="#eef2f8" stroke-width="2"/>
 <circle cx="393" cy="490.2" r="6.1" fill="#eef2f8"/>
 <path d="M393 486.5v7.5M389.2 490.2h7.6" stroke="#8aa9d2" stroke-width="1.8"/>
 <circle cx="467" cy="490.5" r="6.2" fill="#eef2f8"/>
 <rect x="463" y="489.5" width="8" height="2" fill="#8aa9d2"/>
 <rect x="537.8" y="486.8" width="7.2" height="7.2" rx="1.6" fill="#eef2f8"/>
 <g fill="#eef2f8"><path d="M534.8 483.8h3.4l-3.4 3.4z"/><path d="M548.2 483.8h-3.4l3.4 3.4z"/><path d="M534.8 497.2h3.4l-3.4-3.4z"/><path d="M548.2 497.2h-3.4l3.4-3.4z"/></g>
 <g transform="translate(-82 361)">
 <path d="M705.5 122.5h11.5l3.5 3.5v10h-15z" fill="#6a96cc" opacity=".35"/>
 <g fill="none" stroke="#eef2f8" stroke-width="1.2">
  <path d="M705.6 122.6h11.4l3.4 3.4M720.4 132.5v3.9h-14.8v-13.8"/><path d="M708.3 122.6v13.8"/>
  <circle cx="708.2" cy="132.2" r="1.6"/>
  <path d="M712.5 126.5v-2h2.5"/>
  <path d="M712.5 130.5l2.5 2.5h3l2.5-2.5"/>
 </g>
 <path d="M715 127h6v5z" fill="#eef2f8"/><path d="M717 122.6l3.5 3.5h-3.5z" fill="#eef2f8"/>
 </g>
 <path d="M745.6 486.6v10h11v-7" fill="none" stroke="#eef2f8" stroke-width="1.2"/>
 <path d="M746 486.6h2" stroke="#eef2f8" stroke-width="1.2"/>
 <path d="M748 489l3.5-4.5 3.5 4.5" fill="none" stroke="#eef2f8" stroke-width="1.3" stroke-dasharray="1 .6"/>
 <path d="M752.5 483.2h8.6v6.8h-2v-4.6h-6z" fill="#eef2f8"/>
 <rect x="747" y="491.5" width="2" height="1" fill="#eef2f8"/><rect x="750" y="491.5" width="5" height="1" fill="#eef2f8"/>
 <rect x="747" y="493.5" width="2" height="1" fill="#eef2f8"/><rect x="750" y="493.5" width="5" height="1" fill="#eef2f8"/>
 <!-- scrollbar arrows & grip -->
 <path d="M217 433.5l-3.5 3.5 3.5 3.5" fill="none" stroke="#6e9ef0" stroke-width="1.6"/>
 <path d="M845.5 433v8M849.5 433v8M853.5 433v8" stroke="#929a96" stroke-width="1"/>
</svg>
<svg class="a" style="left:1560px;top:428px" width="40" height="20" viewBox="1560 428 40 20">
 <path d="M1584 433.5l3.5 3.5-3.5 3.5" fill="none" stroke="#6e9ef0" stroke-width="1.6"/>
</svg>

<!-- message -->
<svg class="a" style="left:730px;top:600px" width="340" height="140" viewBox="730 600 340 140">
 <defs>
  <filter id="bb" x="-20%" y="-40%" width="140%" height="180%"><feGaussianBlur stdDeviation="4.5"/></filter>
  <filter id="bs" x="-20%" y="-40%" width="140%" height="180%"><feGaussianBlur stdDeviation="1.2"/></filter>
  <linearGradient id="brg" x1="0" y1="0" x2="0" y2="1"><stop offset="0" stop-color="#d6eafa"/><stop offset=".5" stop-color="#bcdcf6"/><stop offset="1" stop-color="#cfe6fa"/></linearGradient>
 </defs>
 <path d="M812 636 L1010 646 L1032 664 L1026 706 L840 712 L772 698 L772 670 Z" fill="url(#brg)" filter="url(#bb)" opacity=".9"/>
 <g stroke="#fff" stroke-width="2.2" opacity=".75" filter="url(#bs)">
  <path d="M805 650 L840 632"/><path d="M835 646 L870 634"/><path d="M955 652 L985 640"/><path d="M985 660 L1020 648"/>
  <path d="M778 700 L815 680"/><path d="M860 706 L905 688"/><path d="M920 712 L965 692"/><path d="M780 690 L800 678"/>
 </g>
</svg>
<div class="t" style="left:772px;top:666px;color:#2a5d9b;font-size:16px;line-height:16px;letter-spacing:.7px">选择单个任务才能查看下载结果喔~</div>

<!-- status -->
<div class="a" style="left:207px;top:839px;width:1388px;height:16px;background:#ccccff"></div>
<div class="t" style="left:213px;top:841px;color:#0000ff">当前坐标：</div>
<div class="sm" style="left:285px">00°</div><div class="sm" style="left:309px">00′</div><div class="sm" style="left:339px">0.00″</div><div class="sm" style="left:375px">W</div>
<div class="sm" style="left:387px">00°</div><div class="sm" style="left:411px">00′</div><div class="sm" style="left:441px">0.00″</div><div class="sm" style="left:477px">S</div>
<div class="t" style="left:495px;top:841px;color:#0000ff">当前级别：</div><div class="sm" style="left:555px">1</div>

<!-- user -->
<div class="t" style="left:1506px;top:65px;color:#fff">登陆</div>
<div class="t" style="left:1548px;top:65px;color:#fff">注册</div>
</body></html>
